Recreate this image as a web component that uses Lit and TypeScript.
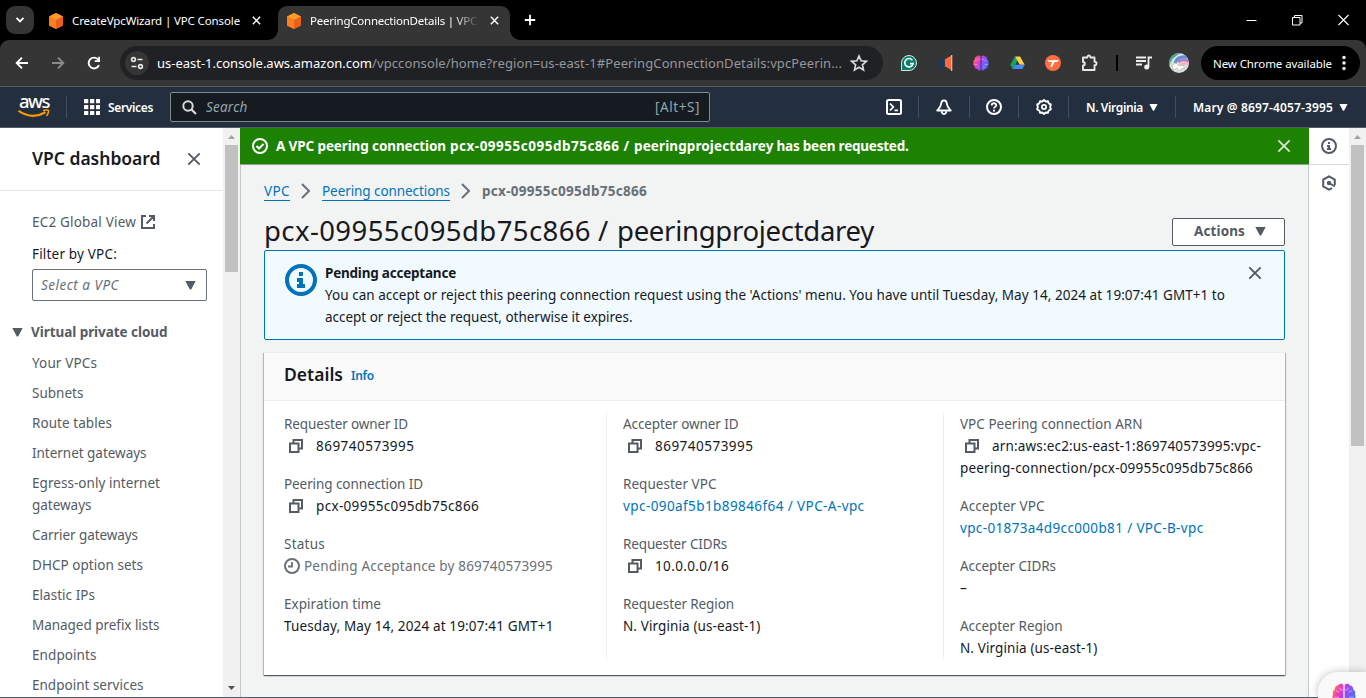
import { LitElement, html, svg, css, nothing } from "lit";
import { customElement } from "lit/decorators.js";
import { styleMap } from "lit/directives/style-map.js";

const FAMILY = '"Noto Sans", "Open Sans", sans-serif';
const pen = document.createElement("canvas").getContext("2d")!;

type Face = "tab" | "url" | "chip" | "body" | "bold" | "ital" | "h1" | "h2" | "h3" | "nav" | "logo";
const FACES: Record<Face, string> = {
  tab: "400 11.5px",
  chip: "400 11.5px",
  url: "400 13px",
  body: "400 13.5px",
  bold: "700 13.5px",
  ital: "italic 400 13.5px",
  h1: "400 27.5px",
  h2: "600 17.5px",
  h3: "600 17.5px",
  nav: "600 12px",
  logo: "500 18.5px",
};

/** Text tracked so that it takes exactly the given width. */
function fit(text: string, width: number, face: Face = "body", extra = "") {
  pen.font = `${FACES[face]} ${FAMILY}`;
  const gap = (width - pen.measureText(text).width) / Math.max(1, text.length);
  return html`<span class="t ${face} ${extra}" style=${styleMap({ letterSpacing: `${gap.toFixed(3)}px` })}>${text}</span>`;
}

const cross = (size: number, w: number) => html`<svg class="ic" width=${size} height=${size} viewBox="0 0 16 16">
  <path d="M1.5 1.5l13 13M14.5 1.5l-13 13" fill="none" stroke="currentColor" stroke-width=${w} /></svg>`;

const caret = (w = 10, h = 8) => html`<svg class="ic" width=${w} height=${h} viewBox="0 0 10 8">
  <path d="M0.3 0h9.4L5.6 7.6h-1.2z" fill="currentColor" /></svg>`;

const cube = html`<svg class="ic" width="16" height="16" viewBox="0 0 16 16">
  <path d="M8 0l7 3.6v8.8L8 16l-7-3.6V3.6z" fill="#f26a1b" />
  <path d="M8 0l7 3.6-7 3.5-7-3.5z" fill="#fb9b2a" />
  <path d="M1 3.6l7 3.5V16l-7-3.6z" fill="#f9801d" /><path d="M15 3.6L8 7.1V16l7-3.6z" fill="#e8601c" /></svg>`;

const brainShape = (id: string) => svg`
  <defs><linearGradient id=${id} gradientUnits="userSpaceOnUse" x1="1" y1="2" x2="15" y2="8">
    <stop offset="0" stop-color="#ff8a2d" /><stop offset=".28" stop-color="#f03fb4" />
    <stop offset=".55" stop-color="#b040f2" /><stop offset="1" stop-color="#4a74f5" /></linearGradient></defs>
  <path d="M7.6 1.4C6.9.3 4.8.1 4 1.6 2.300 1.700 1.600 3.200 1.900 4.400.500 5 .200 6.600.700 7.600 0 8.800.200 10.500 1.500 11.200 1.500 12.900 2.700 14 4.100 14 5 15.800 7.100 15.700 7.600 14.500z" fill="url(#${id})" />
  <path d="M8.400 1.400C9.100.3 11.200.1 12 1.600c1.700.1 2.400 1.600 2.100 2.800 1.400.6 1.700 2.200 1.200 3.200.7 1.200.5 2.900-.8 3.600 0 1.700-1.200 2.800-2.600 2.800-.9 1.800-3 1.700-3.500.5z" fill="url(#${id})" />
  <path d="M2.500 5.500c1-.5 2 0 2.300.8M1.500 9.500h2.500l1 1.200M5 3.200l.8 1.300h1.500M5 13l.500-1.500M13.500 5.500c-1-.5-2 0-2.300.8M14.500 9.500H12l-1 1.200M11 3.200l-.8 1.300H8.800M11 13l-.5-1.500" fill="none" stroke="#fff" stroke-opacity=".45" stroke-width=".7" />`;

const copy = html`<svg class="ic copy" width="16" height="16" viewBox="0 0 16 16">
  <path d="M2 5.500h8.500V14H2zM5.500 5.500V2H14v8.500h-3.500" fill="none" stroke="#545b64" stroke-width="2" /></svg>`;

const infoMark = (w: number, color: string) => html`<svg class="ic" width=${w} height=${w} viewBox="0 0 16 16">
  <circle cx="8" cy="8" r="7" fill="none" stroke=${color} stroke-width="2" />
  <path d="M7 4h2v2H7zM6 7h3v3h1v2H6v-2h1V9H6z" fill=${color} /></svg>`;

const chromeExtensions = [
  html`<svg class="ic" width="16" height="16" viewBox="0 0 16 16"><path d="M.5 15.500V8A7.500 7.500 0 1 1 8 15.500z" fill="#0b8068" stroke="#d5e8e3" />
    <path d="M11.300 5.200A4.200 4.200 0 1 0 12.100 8.600H9" fill="none" stroke="#fff" stroke-width="1.600" /></svg>`,
  html`<svg class="ic" width="16" height="16" viewBox="0 0 16 16"><path d="M7.500 4.500L14 .8v14L7.500 11z" fill="#ff6b3d" /><path d="M14 0h1.300v16H14z" fill="#e9b8a8" />
    <path d="M8 4.500H3.500a3.400 3.400 0 0 0-1 6.500L4 15.300h2.500V11H8z" fill="#20395a" /></svg>`,
  html`<svg class="ic" width="16" height="16" viewBox="0 0 16 16">${brainShape("b1")}</svg>`,
  html`<svg class="ic" width="15" height="14" viewBox="0 0 15 14"><path d="M5 .5L.3 8.700l2.400 4.200L7.500 4.800z" fill="#11a861" />
    <path d="M5 .5h5l4.700 8.200H9.800z" fill="#ffcf4a" /><path d="M2.700 12.900l2.400-4.200h9.600l-2.400 4.200z" fill="#4688f4" /></svg>`,
  html`<svg class="ic" width="16" height="16" viewBox="0 0 16 16"><circle cx="8" cy="8" r="8" fill="#ff6e42" />
    <path d="M2.200 5.800C4 4.800 5.500 5.500 8 5.200c2.500-.2 4-.2 6-.2-1.500 2.200-3 2-4.300 2-1.500 2-1.800 4.600-3.900 5.600-.6-2.500.8-4.200 1.700-5.600-2 .1-3.800.2-5.300-1.200z" fill="#fff" /></svg>`,
  html`<svg class="ic" width="18" height="18" viewBox="0 0 18 18">
    <path d="M2 3.500h4.300c-.2-2.600 3.400-2.600 3.200 0h4v4.300c2.700-.2 2.700 3.600 0 3.400V16H2v-4.500c2.400 0 2.400-3.500 0-3.500z" fill="none" stroke="#e8e8e8" stroke-width="1.900" stroke-linejoin="round" /></svg>`,
];

interface Field { label: string; lw: number; value: string; vw: number; kind?: "copy" | "link" | "status"; more?: [string, number] }
const COLUMNS: Field[][] = [
  [
    { label: "Requester owner ID", lw: 124, value: "869740573995", vw: 98.500, kind: "copy" },
    { label: "Peering connection ID", lw: 139, value: "pcx-09955c095db75c866", vw: 163, kind: "copy" },
    { label: "Status", lw: 41, value: "Pending Acceptance by 869740573995", vw: 249, kind: "status" },
    { label: "Expiration time", lw: 97, value: "Tuesday, May 14, 2024 at 19:07:41 GMT+1", vw: 269.500 },
  ],
  [
    { label: "Accepter owner ID", lw: 115.500, value: "869740573995", vw: 98.500, kind: "copy" },
    { label: "Requester VPC", lw: 93.500, value: "vpc-090af5b1b89846f64 / VPC-A-vpc", vw: 241.500, kind: "link" },
    { label: "Requester CIDRs", lw: 104, value: "10.0.0.0/16", vw: 74, kind: "copy" },
    { label: "Requester Region", lw: 111, value: "N. Virginia (us-east-1)", vw: 137.500 },
  ],
  [
    { label: "VPC Peering connection ARN", lw: 182.500, value: "arn:aws:ec2:us-east-1:869740573995:vpc-", vw: 269, kind: "copy", more: ["peering-connection/pcx-09955c095db75c866", 293] },
    { label: "Accepter VPC", lw: 84.500, value: "vpc-01873a4d9cc000b81 / VPC-B-vpc", vw: 243.500, kind: "link" },
    { label: "Accepter CIDRs", lw: 96, value: "–", vw: 7 },
    { label: "Accepter Region", lw: 102.500, value: "N. Virginia (us-east-1)", vw: 137.500 },
  ],
];

const LINKS: [string, number, string?, number?][] = [
  ["Your VPCs", 65], ["Subnets", 51.500], ["Route tables", 80], ["Internet gateways", 114.500],
  ["Egress-only internet", 128, "gateways", 59.500], ["Carrier gateways", 106], ["DHCP option sets", 111],
  ["Elastic IPs", 63], ["Managed prefix lists", 127.500], ["Endpoints", 64.500], ["Endpoint services", 111.500],
];

const shared = css`
  * { box-sizing: border-box; }
  .t { white-space: nowrap; display: block; }
  .ic { display: block; flex: none; }
  .tab, .chip { font-size: 11.5px; }
  .url { font-size: 13px; }
  .body { font-size: 13.5px; }
  .bold { font-size: 13.5px; font-weight: 700; }
  .ital { font-size: 13.5px; font-style: italic; }
  .h1 { font-size: 27.5px; }
  .h2, .h3 { font-size: 17.5px; font-weight: 600; }
  .nav { font-size: 12px; font-weight: 600; }
  .logo { font-size: 18.5px; font-weight: 500; }
`;

@customElement("browser-frame")
class BrowserFrame extends LitElement {
  static styles = [shared, css`
    :host { display: block; flex: none; background: #000; color: #fff; }
    .tabs { height: 40px; display: flex; align-items: flex-start; padding: 6px 0 0 6px; }
    .search { width: 28px; height: 28px; border-radius: 9px; background: #353535; display: grid; place-items: center; margin-right: 14px; }
    .one { height: 34px; display: flex; align-items: center; padding-bottom: 5px; }
    .idle { width: 230px; gap: 8px; }
    .idle .t { margin-right: 4px; }
    .active { width: 232px; background: #353535; border-radius: 9px 9px 0 0; padding-left: 8px; gap: 8px; position: relative; }
    .active::before, .active::after { content: ""; position: absolute; bottom: 0; width: 10px; height: 10px; }
    .active::before { left: -10px; background: radial-gradient(circle at 0 0, transparent 9.5px, #353535 10px); }
    .active::after { right: -10px; background: radial-gradient(circle at 100% 0, transparent 9.5px, #353535 10px); }
    .fade { width: 168px; mask-image: linear-gradient(90deg, #000 143px, transparent 170px); }
    .active .x { margin-left: 4px; }
    .plus { margin: 8px 0 0 14px; }
    .win { margin-left: auto; display: flex; gap: 35px; padding: 8px 17px 0 0; }
    .bar { height: 46px; background: #353535; border-radius: 9px 9px 0 0; display: flex; align-items: center; }
    .arrows { display: flex; gap: 20px; padding: 0 18px 0 14px; align-items: center; }
    .pill { width: 763px; height: 34px; border-radius: 17px; background: #202124; display: flex; align-items: center; padding: 0 15px 0 5px; }
    .site { width: 24px; height: 24px; border-radius: 50%; background: #353535; display: grid; place-items: center; margin-right: 8px; }
    .dim { color: #95989c; }
    .star { margin-left: auto; }
    .ext { display: flex; margin-left: 8px; }
    .cell { width: 36px; height: 20px; display: grid; place-items: center; }
    .cell:last-child { width: 38px; }
    .rule { width: 2px; height: 16px; background: #000; margin: 0 18px 0 7px; }
    .avatar { margin: 0 12px 0 17px; }
    .update { width: 159px; height: 34px; border-radius: 17px; background: #000; display: flex; align-items: center; padding-left: 12px; gap: 10px; }
  `];
  render() {
    return html`
      <div class="tabs">
        <div class="search"><svg class="ic" width="10" height="8" viewBox="0 0 10 8"><path d="M1.500 1.800L5 5.300l3.500-3.500" fill="none" stroke="#fff" stroke-width="1.900" /></svg></div>
        <div class="one idle">${cube}${fit("CreateVpcWizard | VPC Console", 168, "tab")}<span class="x">${cross(9, 2.600)}</span></div>
        <div class="one active">${cube}<div class="fade">${fit("PeeringConnectionDetails | VPC", 167, "tab")}</div><span class="x">${cross(9, 2.600)}</span></div>
        <svg class="ic plus" width="12" height="12" viewBox="0 0 12 12"><path d="M6 .8v10.400M.8 6h10.400" stroke="#fff" stroke-width="1.800" /></svg>
        <div class="win">
          <svg class="ic" width="11" height="12" viewBox="0 0 11 12"><path d="M.5 6.500h10" stroke="#fff" /></svg>
          <svg class="ic" width="11" height="12" viewBox="0 0 11 12"><path d="M.5 3.500h7.500v7.500H.5zM2.500 3.500v-2H10v7.500H8" fill="none" stroke="#fff" /></svg>
          <svg class="ic" width="11" height="12" viewBox="0 0 11 12"><path d="M.5 1l10 10M10.500 1l-10 10" stroke="#fff" stroke-width="1.100" /></svg>
        </div>
      </div>
      <div class="bar">
        <div class="arrows">
          <svg class="ic" width="16" height="16" viewBox="0 0 16 16"><path d="M14 8H3M8 2.700L2.700 8 8 13.300" fill="none" stroke="#fff" stroke-width="1.900" /></svg>
          <svg class="ic" width="16" height="16" viewBox="0 0 16 16"><path d="M2 8h11M8 2.700L13.300 8 8 13.300" fill="none" stroke="#8b8b8b" stroke-width="1.900" /></svg>
          <svg class="ic" width="16" height="16" viewBox="0 0 16 16"><path d="M13 10.200A5.400 5.400 0 1 1 12.300 4.700L13 5.600" fill="none" stroke="#fff" stroke-width="1.900" /><path d="M14 1.700v5.300H8.700V5.200h3.500V1.700z" fill="#fff" /></svg>
        </div>
        <div class="pill">
          <div class="site"><svg class="ic" width="14" height="14" viewBox="0 0 14 14"><g fill="none" stroke="#e8e8e8" stroke-width="1.600"><circle cx="3.500" cy="3.500" r="1.900" /><path d="M7.500 3.500h5M1.500 10.500h5" /><circle cx="10.500" cy="10.500" r="1.900" /></g></svg></div>
          ${fit("us-east-1.console.aws.amazon.com", 215, "url")}
          ${fit("/vpcconsole/home?region=us-east-1#PeeringConnectionDetails:vpcPeerin...", 470, "url", "dim")}
          <svg class="ic star" width="18" height="18" viewBox="0 0 18 18"><path d="M9 2l2.100 4.800 5.200.5-3.900 3.500 1.100 5.100L9 13.200l-4.500 2.700 1.100-5.100-3.900-3.500 5.200-.5z" fill="none" stroke="#d4d6d8" stroke-width="1.700" /></svg>
        </div>
        <div class="ext">${chromeExtensions.map((e) => html`<div class="cell">${e}</div>`)}</div>
        <div class="rule"></div>
        <svg class="ic" width="16" height="14" viewBox="0 0 16 14"><path d="M0 1.500h10M0 5h10M0 8.500h6M12.500 11V1.500H16" fill="none" stroke="#eee" stroke-width="1.800" /><circle cx="10.700" cy="11" r="2.500" fill="#eee" /></svg>
        <svg class="ic avatar" width="20" height="20" viewBox="0 0 20 20">
          <clipPath id="av"><circle cx="10" cy="10" r="10" /></clipPath>
          <g clip-path="url(#av)"><path d="M0 0h20v20H0z" fill="#dcdfe0" /><path d="M0 14Q2 4 12 0L0 0z" fill="#3fa58c" />
            <path d="M6 10Q8 3 18 4" fill="none" stroke="#5d8fd6" stroke-width="3" /><path d="M9 9q4-4 11-1" fill="none" stroke="#b27fce" stroke-width="3" /><path d="M11 12q4-3 9-1" fill="none" stroke="#f0b5b8" stroke-width="2.500" />
            <path d="M3 12l4-2 3 3 4-1 2 4-3-1-2 3-3-3-4 2z" fill="#fff" stroke="#b9b6a3" stroke-width=".7" /></g></svg>
        <div class="update">${fit("New Chrome available", 119, "chip")}
          <svg class="ic" width="4" height="16" viewBox="0 0 4 16"><g fill="#fff"><circle cx="2" cy="2.500" r="1.700" /><circle cx="2" cy="8" r="1.700" /><circle cx="2" cy="13.500" r="1.700" /></g></svg></div>
      </div>`;
  }
}

@customElement("console-nav")
class ConsoleNav extends LitElement {
  static styles = [shared, css`
    :host { display: flex; flex: none; height: 42px; background: #232f3e; color: #fff; border-top: 1px solid #5c5c5c; border-bottom: 1px solid #545b64; align-items: center; }
    .brand { width: 49px; padding-left: 18px; height: 100%; display: flex; flex-direction: column; align-items: flex-start; padding-top: 5px; }
    .brand .t { line-height: 17px; height: 17px; padding-left: 1px; }
    .sep { width: 1px; height: 22px; background: #414d5c; margin: 0 17px; }
    .svc { display: flex; gap: 8px; align-items: center; width: 86px; }
    .box { width: 540px; height: 30px; border: 1px solid #7f8c8d; border-radius: 2px; background: #161b22; display: flex; align-items: center; padding: 0 9px 0 11px; color: #95a5a6; }
    .box .ital { margin-left: 9px; }
    .hint { margin-left: auto; }
    .right { display: flex; margin-left: auto; }
    .cell { height: 22px; border-right: 1px solid #414d5c; display: grid; place-items: center; width: 50px; }
    .narrow { width: 49px; }
    .wide { width: 51px; }
    .menu { height: 22px; display: flex; align-items: center; padding-left: 17px; gap: 6px; width: 107px; border-right: 1px solid #414d5c; }
    .user { width: 190px; border-right: 0; }
  `];
  render() {
    const dots = [0, 6, 12];
    return html`
      <div class="brand">${fit("aws", 30, "logo")}
        <svg class="ic" width="32" height="10" viewBox="0 0 32 10"><path d="M.5 1.800Q14 11 27.500 3.200" fill="none" stroke="#f90" stroke-width="2.200" /><path d="M25 1.500q4.500-1 5.500 0 .5 2.500-2 5.500" fill="none" stroke="#f90" stroke-width="1.600" /></svg></div>
      <div class="sep"></div>
      <div class="svc"><svg class="ic" width="16" height="16" viewBox="0 0 16 16">${dots.map((y) => dots.map((x) => svg`<rect x=${x} y=${y} width="4.300" height="4.300" rx=".6" fill="#fff" />`))}</svg>${fit("Services", 45, "nav")}</div>
      <div class="box"><svg class="ic" width="15" height="15" viewBox="0 0 15 15"><circle cx="6" cy="6" r="4.700" fill="none" stroke="#d5dbdb" stroke-width="2" /><path d="M9.500 9.500l4.500 4.500" stroke="#d5dbdb" stroke-width="2.200" /></svg>
        ${fit("Search", 41.500, "ital")}${fit("[Alt+S]", 45, "body", "hint")}</div>
      <div class="right">
        <div class="cell narrow"><svg class="ic" width="16" height="16" viewBox="0 0 16 16"><rect x="1" y="1" width="14" height="14" rx="1.500" fill="none" stroke="#fff" stroke-width="2" /><path d="M4 4.500L7.300 8 4 11.500M8.500 11.300H12" fill="none" stroke="#fff" stroke-width="1.800" /></svg></div>
        <div class="cell wide"><svg class="ic" width="16" height="16" viewBox="0 0 16 16"><path d="M8 1.400C6 1.400 5.300 3 5.100 5 4.900 7.600 3.600 8.900 1.300 11.500h13.400C12.400 8.900 11.100 7.600 10.900 5 10.700 3 10 1.400 8 1.400z" fill="none" stroke="#fff" stroke-width="1.900" stroke-linejoin="round" /><path d="M5.800 12.200v1.200q2.200 3.200 4.400 0v-1.200" fill="none" stroke="#fff" stroke-width="1.800" /></svg></div>
        <div class="cell narrow"><svg class="ic" width="16" height="16" viewBox="0 0 16 16"><circle cx="8" cy="8" r="7" fill="none" stroke="#fff" stroke-width="2" /><path d="M5.700 6.500C5.700 3.500 10.300 3.600 10.300 6.300 10.300 8 8 7.700 8 9.600" fill="none" stroke="#fff" stroke-width="1.800" /><path d="M7 10.800h2v1.800H7z" fill="#fff" /></svg></div>
        <div class="cell"><svg class="ic" width="16" height="16" viewBox="0 0 16 16"><path d="M8 1l1.700 1.500L12 2.200l.7 2.200 2.100 1L14.200 8l.6 2.500-2.100 1-.7 2.300-2.300-.3L8 15l-1.700-1.500-2.300.3-.7-2.300-2.100-1L1.800 8l-.6-2.600 2.100-1L4 2.200l2.300.3z" fill="none" stroke="#fff" stroke-width="1.900" stroke-linejoin="round" /><circle cx="8" cy="8" r="2.100" fill="none" stroke="#fff" stroke-width="1.800" /></svg></div>
        <div class="menu">${fit("N. Virginia", 57, "nav")}${caret(9, 7)}</div>
        <div class="menu user">${fit("Mary @ 8697-4057-3995", 140, "nav")}${caret(9, 7)}</div>
      </div>`;
  }
}

@customElement("scroll-track")
class ScrollTrack extends LitElement {
  static properties = { thumb: { type: Number } };
  declare thumb: number;
  static styles = css`
    :host { display: flex; flex-direction: column; width: 17px; flex: none; background: #f1f1f1; align-items: center; }
    svg { display: block; flex: none; }
    .thumb { width: 13px; background: #c1c1c1; margin-bottom: auto; }
  `;
  render() {
    return html`<svg width="17" height="17" viewBox="0 0 17 17"><path d="M5 11l3.500-4 3.500 4z" fill="#a3a3a3" /></svg>
      <div class="thumb" style=${styleMap({ height: `${this.thumb}px` })}></div>
      <svg width="17" height="17" viewBox="0 0 17 17"><path d="M5 6l3.500 4L12 6z" fill="#505050" /></svg>`;
  }
}

@customElement("vpc-sidebar")
class VpcSidebar extends LitElement {
  static styles = [shared, css`
    :host { display: flex; width: 240px; flex: none; background: #fff; color: #545b64; }
    .panel { width: 223px; line-height: 22px; }
    .head { height: 63px; border-bottom: 1px solid #e3e6e6; padding: 0 22px 0 32px; display: flex; align-items: center; justify-content: space-between; }
    .head .t { color: #16191f; margin-bottom: 2px; }
    .body-area { padding: 20px 16px 0 32px; }
    .ec2 { display: flex; gap: 5px; align-items: center; }
    .label { color: #16191f; margin: 10px 0 4px; }
    .select { width: 175px; height: 32px; border: 1px solid #687078; border-radius: 2px; display: flex; align-items: center; justify-content: space-between; padding: 0 10px 0 8px; margin-bottom: 20px; color: #545b64; }
    .select .t { color: #687078; }
    .group { display: flex; align-items: center; gap: 8px; margin: 0 0 9px -20px; }
    .list { display: flex; flex-direction: column; gap: 8px; }
  `];
  render() {
    return html`<div class="panel">
        <div class="head">${fit("VPC dashboard", 128.500, "h2")}${cross(14, 2.200)}</div>
        <div class="body-area">
          <div class="ec2">${fit("EC2 Global View", 104)}<svg class="ic" width="14" height="14" viewBox="0 0 14 14"><path d="M5 1H1v12h12V9M8 1h5v5M13 1L5.500 8.500" fill="none" stroke="#545b64" stroke-width="2" /></svg></div>
          <div class="label">${fit("Filter by VPC:", 85)}</div>
          <div class="select">${fit("Select a VPC", 78, "ital")}${caret(11, 9)}</div>
          <div class="group">${caret(11, 9)}${fit("Virtual private cloud", 136.500, "bold")}</div>
          <div class="list">${LINKS.map(([a, w, b, v]) => html`<div>${fit(a, w)}${b ? fit(b, v!) : nothing}</div>`)}</div>
        </div>
      </div>
      <scroll-track .thumb=${127}></scroll-track>`;
  }
}

@customElement("peering-details")
class PeeringDetails extends LitElement {
  static styles = [shared, css`
    :host { display: block; flex: 1; min-width: 0; background: #f2f3f3; border-left: 1px solid #c3c9cd; color: #16191f; line-height: 22px; }
    .flash { position: relative; height: 37px; margin: 0 -1px; background: #1d8102; border-bottom: 1px solid #8ea38a; color: #fff; display: flex; align-items: center; padding: 0 18px 0 12px; }
    .flash .ic:first-child { margin-right: 8px; }
    .flash b { margin: 0 3px 0 4px; font-weight: inherit; display: flex; gap: 4px; }
    .flash .ic:last-child { margin-left: auto; color: #d9e8d5; }
    .page { padding: 15px 23px 0 23px; }
    .crumbs { display: flex; align-items: center; height: 22px; }
    .crumbs .link { border-bottom: 1px solid #0073bb; line-height: 20px; height: 20px; margin-top: 0; }
    .crumbs .chev { margin: 0 11px; }
    .link { color: #0073bb; }
    .here { color: #687078; }
    .title { display: flex; justify-content: space-between; align-items: flex-end; height: 44px; padding-bottom: 4px; margin-top: 4px; }
    .name { display: flex; gap: 7px; line-height: 30px; margin-bottom: 0; }
    .actions { width: 113px; height: 28px; border: 1px solid #545b64; border-radius: 2px; background: #fff; color: #545b64; display: flex; align-items: center; padding: 0 0 2px 21px; gap: 10px; }
    .alert { height: 90px; border: 1px solid #0073bb; border-radius: 2px; background: #f1faff; display: flex; padding: 11px 22px 0 20px; }
    .alert .txt { margin-left: 8px; flex: 1; }
    .alert > .ic { margin-top: 2px; }
    .alert > .ic:last-child { margin-top: 4px; color: #545b64; }
    .card { margin: 12px 0 0; background: #fff; border-top: 1px solid #eaeded; box-shadow: 0 1px 1px 0 rgba(0,28,36,.5), 1px 1px 1px 0 rgba(0,28,36,.22), -1px 1px 1px 0 rgba(0,28,36,.2); }
    .card-head { height: 48px; background: #fafafa; border-bottom: 1px solid #eaeded; padding: 0 20px 5px; display: flex; align-items: center; gap: 8px; }
    .card-head .nav { margin-top: 4px; }
    .cols { display: grid; grid-template-columns: 342px 337px 1fr; padding: 12px 0 16px; }
    .col { border-left: 1px solid #eaeded; padding-left: 16px; display: flex; flex-direction: column; gap: 16px; height: 246px; }
    .col:first-child { border-left: 0; padding-left: 20px; }
    .label { color: #545b64; }
    .value { display: flex; align-items: center; }
    .copy { margin: 0 12px 0 4px; }
    .status { color: #687078; gap: 4px; }
  `];
  private field(f: Field) {
    return html`<div><div class="label">${fit(f.label, f.lw)}</div>
      <div class="value ${f.kind === "status" ? "status" : ""}">
        ${f.kind === "copy" ? copy : nothing}
        ${f.kind === "status" ? html`<svg class="ic" width="16" height="16" viewBox="0 0 16 16"><circle cx="8" cy="8" r="7" fill="none" stroke="#687078" stroke-width="2" /><path d="M8 4v4.500H4" fill="none" stroke="#687078" stroke-width="1.800" /></svg>` : nothing}
        ${fit(f.value, f.vw, "body", f.kind === "link" ? "link" : "")}</div>
      ${f.more ? fit(f.more[0], f.more[1]) : nothing}</div>`;
  }
  render() {
    const chev = html`<svg class="ic chev" width="10" height="16" viewBox="0 0 10 16"><path d="M1 1l7 7-7 7" fill="none" stroke="#687078" stroke-width="2" /></svg>`;
    return html`
      <div class="flash">
        <svg class="ic" width="16" height="16" viewBox="0 0 16 16"><circle cx="8" cy="8" r="7" fill="none" stroke="#fff" stroke-width="2" /><path d="M4.500 8l2.500 2.500 4.500-4.500" fill="none" stroke="#fff" stroke-width="2" /></svg>
        ${fit("A VPC peering connection", 170, "bold")}<b>${fit("pcx-09955c095db75c866", 169.500, "bold")}${fit("/", 6.500, "bold")}${fit("peeringprojectdarey", 139.500, "bold")}</b>${fit("has been requested.", 132, "bold")}
        ${cross(14, 2.100)}
      </div>
      <div class="page">
        <div class="crumbs">${fit("VPC", 26, "body", "link")}${chev}${fit("Peering connections", 128, "body", "link")}${chev}${fit("pcx-09955c095db75c866", 165, "bold", "here")}</div>
        <div class="title"><div class="name">${fit("pcx-09955c095db75c866", 327, "h1")}${fit("/", 12, "h1")}${fit("peeringprojectdarey", 257, "h1")}</div>
          <div class="actions">${fit("Actions", 51, "bold")}${caret(11, 9)}</div></div>
        <div class="alert">${infoMark(32, "#0073bb")}
          <div class="txt">${fit("Pending acceptance", 131, "bold")}${fit("You can accept or reject this peering connection request using the 'Actions' menu. You have until Tuesday, May 14, 2024 at 19:07:41 GMT+1 to", 900)}${fit("accept or reject the request, otherwise it expires.", 307.500)}</div>
          ${cross(14, 2.200)}</div>
        <div class="card">
          <div class="card-head">${fit("Details", 59, "h3")}${fit("Info", 23, "nav", "link")}</div>
          <div class="cols">${COLUMNS.map((c) => html`<div class="col">${c.map((f) => this.field(f))}</div>`)}</div>
        </div>
      </div>`;
  }
}

@customElement("app-root")
class AppRoot extends LitElement {
  static styles = [shared, css`
    :host { display: flex; flex-direction: column; height: 698px; overflow: hidden; position: relative; font-family: "Noto Sans", "Open Sans", sans-serif; background: #fff; }
    .work { flex: 1; min-height: 0; display: flex; border-bottom: 1px solid #545b64; }
    .tools { width: 41px; flex: none; border-left: 1px solid #c3c9cd; background: #fff; }
    .tool { height: 37px; display: grid; place-items: center; }
    .tool:first-child { border-bottom: 1px solid #d5dbdb; }
    .tool:last-child { height: 36px; }
    .helper { position: absolute; right: 0; bottom: 0; width: 48px; height: 26px; border-radius: 20px 0 0 0; background: #f9f9f9; box-shadow: 0 0 9px rgba(0,0,0,.25); padding: 11px 0 0 14px; }
  `];
  render() {
    return html`
      <browser-frame></browser-frame>
      <console-nav></console-nav>
      <div class="work">
        <vpc-sidebar></vpc-sidebar>
        <peering-details></peering-details>
        <div class="tools">
          <div class="tool">${infoMark(16, "#545b64")}</div>
          <div class="tool"><svg class="ic" width="16" height="16" viewBox="0 0 16 16"><path d="M13.800 10V4.500L8 1.300 2.200 4.500v7L8 14.700l3-1.600" fill="none" stroke="#545b64" stroke-width="2" /><circle cx="8" cy="8" r="2.200" fill="#545b64" /><path d="M8 8l6 3.500" stroke="#545b64" stroke-width="2" /></svg></div>
        </div>
        <scroll-track .thumb=${301}></scroll-track>
      </div>
      <div class="helper"><svg class="ic" width="24" height="24" viewBox="0 0 16 16">${brainShape("b2")}</svg></div>`;
  }
}
